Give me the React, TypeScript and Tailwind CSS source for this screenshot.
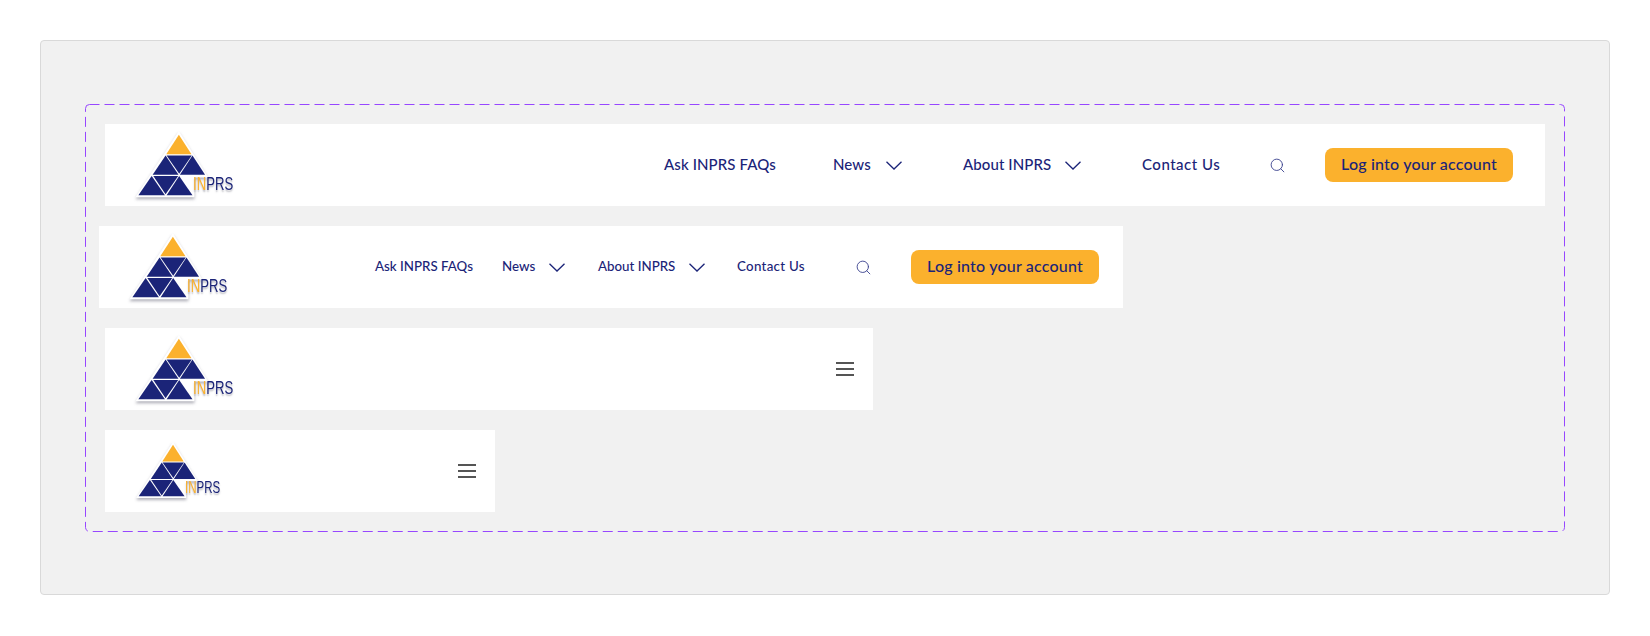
import React from 'react';
import { Search } from 'lucide-react';

const NAVY = '#1b2478';

function Logo({ small }: { small?: boolean }) {
  return (
    <div className={small ? 'relative w-[91px] h-[62px] shrink-0 ml-px' : 'relative w-[107px] h-[73px] shrink-0'}>
      <svg viewBox="100 40 320 220" className="w-full h-full drop-shadow-[0_2px_1.5px_rgba(60,60,80,0.4)]">
        {/* white halo, the drop shadow hangs off this shape */}
        <path d="M237 46 L326 186 L284 186 L284 246 L106 246 Z" fill="#ffffff" />
        <polygon points="237,57 199,116 275,116" fill="#fbb12d" />
        <polygon points="158,178 197,120 236,178" fill={NAVY} />
        <polygon points="200,120 276,120 238,175" fill={NAVY} />
        <polygon points="240,178 278,120 316,178" fill={NAVY} />
        <polygon points="115,240 155,182 195,240" fill={NAVY} />
        <polygon points="160,182 235,182 197,237" fill={NAVY} />
        <polygon points="200,240 238,182 278,240" fill={NAVY} />
      </svg>
      {small ? (
        <span className="absolute left-[51px] top-[39px] origin-top-left scale-x-[0.72] text-[16px] leading-[18px] font-normal tracking-normal font-['Liberation_Sans',sans-serif] whitespace-nowrap text-[#1b2478] [text-shadow:0_2px_2px_rgba(60,60,80,0.35)]">
          <span className="text-[#fbb12d]">IN</span>PRS
        </span>
      ) : (
        <span className="absolute left-[60px] top-[45px] origin-top-left scale-x-[0.73] text-[18px] leading-[21px] font-normal tracking-normal font-['Liberation_Sans',sans-serif] whitespace-nowrap text-[#1b2478] [text-shadow:0_2px_2px_rgba(60,60,80,0.35)]">
          <span className="text-[#fbb12d]">IN</span>PRS
        </span>
      )}
    </div>
  );
}

function Chevron() {
  return (
    <svg viewBox="0 0 16 9" className="w-4 h-[9px] shrink-0" fill="none" stroke={NAVY} strokeWidth="1.3">
      <path d="M0.5 0.7 L8 8 L15.5 0.7" />
    </svg>
  );
}

function Hamburger() {
  return (
    <div className="flex flex-col gap-1 w-[18px]">
      <div className="h-0.5 bg-[#555555]" />
      <div className="h-0.5 bg-[#555555]" />
      <div className="h-0.5 bg-[#555555]" />
    </div>
  );
}

function LoginButton() {
  return (
    <button className="h-[34px] w-[188px] pb-0.5 rounded-lg bg-[#fbb12d] text-[16px] font-medium text-[#1b2478] tracking-[0.2px]">
      Log into your account
    </button>
  );
}

export default function App() {
  return (
    <div className="min-h-screen bg-white pt-10 pl-10 font-['Lato',sans-serif]">
      <div className="w-[1570px] h-[555px] border border-[#d9d9d9] rounded-sm bg-[#f1f1f1] pt-[63px] pl-11">
        <div className="relative w-[1480px] h-[428px] pt-5 pl-5 flex flex-col items-start gap-5">
          {/* figma style component-set outline */}
          <svg className="absolute inset-0 w-full h-full pointer-events-none" fill="none">
            <rect x="0.5" y="0.5" width="1479" height="427" rx="4" stroke="#9747ff" strokeDasharray="10 5" />
          </svg>

          {/* desktop */}
          <div className="w-[1440px] h-[82px] bg-white flex items-center pl-7 pr-8 text-[15px] font-medium text-[#1b2478] tracking-[0.1px] whitespace-nowrap">
            <Logo />
            <span className="ml-auto w-[112px] pb-0.5">Ask INPRS FAQs</span>
            <span className="ml-[57px] w-10 pb-0.5">News</span>
            <span className="ml-[13px]"><Chevron /></span>
            <span className="ml-[61px] w-[89px] pb-0.5">About INPRS</span>
            <span className="ml-[13px]"><Chevron /></span>
            <span className="ml-[61px] w-[78px] pb-0.5 tracking-[0.5px]">Contact Us</span>
            <Search size={17} strokeWidth={1.3} className="ml-[49px] text-[#3d4590]" />
            <span className="ml-[39px]"><LoginButton /></span>
          </div>

          {/* laptop */}
          <div className="-ml-1.5 w-[1024px] h-[82px] bg-white flex items-center pl-7 pr-6 text-[13.3px] font-medium text-[#1b2478] whitespace-nowrap">
            <Logo />
            <span className="ml-auto w-[98px]">Ask INPRS FAQs</span>
            <span className="ml-[29px] w-[34px]">News</span>
            <span className="ml-[13px]"><Chevron /></span>
            <span className="ml-[33px] w-[78px]">About INPRS</span>
            <span className="ml-[13px]"><Chevron /></span>
            <span className="ml-8 w-[69px] tracking-[0.3px]">Contact Us</span>
            <Search size={17} strokeWidth={1.3} className="ml-[49px] text-[#3d4590]" />
            <span className="ml-[39px]"><LoginButton /></span>
          </div>

          {/* tablet */}
          <div className="w-[768px] h-[82px] bg-white flex items-center justify-between pl-7 pr-[19px]">
            <Logo />
            <Hamburger />
          </div>

          {/* mobile */}
          <div className="w-[390px] h-[82px] bg-white flex items-center justify-between pl-7 pr-[19px]">
            <Logo small />
            <Hamburger />
          </div>
        </div>
      </div>
    </div>
  );
}
